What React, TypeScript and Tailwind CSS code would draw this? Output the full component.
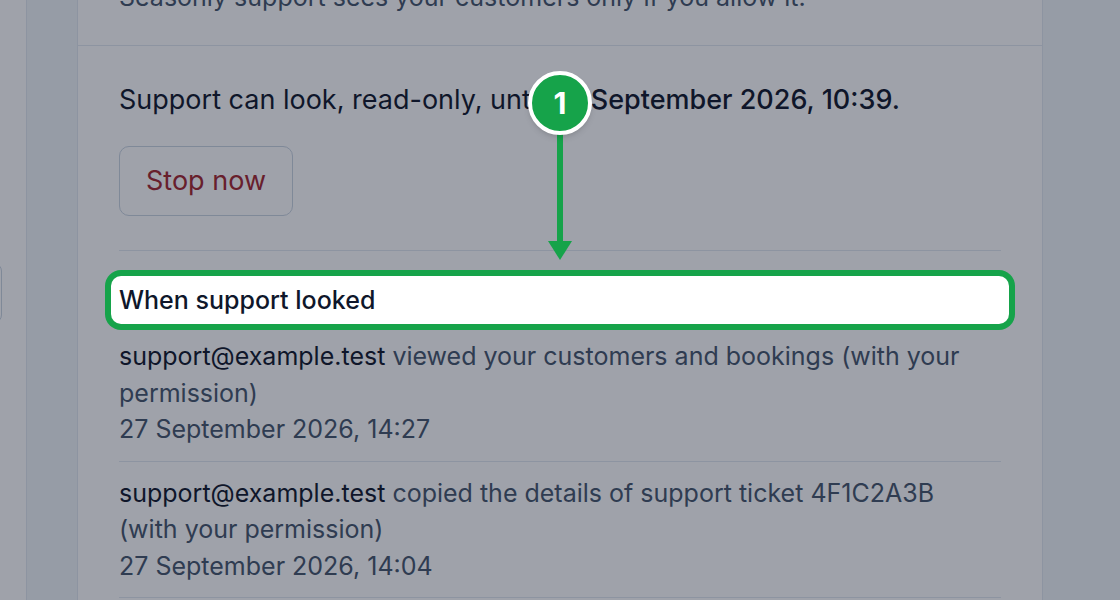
import React from 'react';

interface AccessEvent {
  who: string;
  what: string;
  when: string;
}

const events: AccessEvent[] = [
  {
    who: 'support@example.test',
    what: 'viewed your customers and bookings (with your permission)',
    when: '27 September 2026, 14:27',
  },
  {
    who: 'support@example.test',
    what: 'copied the details of support ticket 4F1C2A3B (with your permission)',
    when: '27 September 2026, 14:04',
  },
  {
    who: 'support@example.test',
    what: 'viewed your customers and bookings (with your permission)',
    when: '27 September 2026, 13:51',
  },
];

export default function App() {
  return (
    <div className="relative h-[600px] w-[1120px] overflow-hidden bg-slate-100 font-['Inter',sans-serif] text-[25px] leading-[36px] text-slate-900">
      <div className="flex h-full">
        <aside className="w-[27px] shrink-0 overflow-hidden border-r border-slate-200 bg-white">
          <div className="-ml-[38px] mt-[263px] h-[60px] w-[40px] rounded-lg border border-slate-300 bg-white" />
        </aside>

        <main className="flex-1 pl-[50px] pr-[77px]">
          <div className="-mt-[60px] border border-slate-200 bg-white">
            <section className="border-b border-slate-200 px-[41px] pb-[30px] pt-[38px]">
              <p className="text-slate-600">Seasonly support sees your customers only if you allow it.</p>
            </section>

            <section className="px-[41px] pt-9">
              <p className="text-[27px]">
                Support can look, read-only, until <span className="font-medium">27 September 2026, 10:39.</span>
              </p>
              <button className="mt-7 h-[70px] w-[174px] rounded-[10px] border-[1.5px] border-slate-300 bg-white text-[27px] text-[#a3262e]">
                Stop now
              </button>

              <div className="mt-[34px] border-t border-slate-200 pt-[31px]">
                <h3 className="relative z-20 -mx-2 -my-1.5 rounded-[10px] bg-white px-2 py-1.5 font-medium text-slate-900 ring-[6px] ring-[#16a34a]">
                  When support looked
                </h3>
                <ul className="mt-[7px]">
                  {events.map((ev, i) => (
                    <li key={i} className="border-b border-slate-200 py-[13px] leading-[36.5px]">
                      <p className="max-w-[860px] text-slate-600">
                        <span className="text-slate-900">{ev.who}</span> {ev.what}
                      </p>
                      <p className="text-slate-600">{ev.when}</p>
                    </li>
                  ))}
                </ul>
              </div>
            </section>
          </div>
        </main>
      </div>

      {/* dim overlay for the walkthrough */}
      <div className="absolute inset-0 z-10 bg-slate-900/40" />

      {/* step marker */}
      <svg className="absolute left-[546px] top-[133px] z-30" width="28" height="128" viewBox="0 0 28 128">
        <line x1="14" y1="0" x2="14" y2="110" stroke="#16a34a" strokeWidth="6" />
        <polygon points="2,108 26,108 14,127" fill="#16a34a" />
      </svg>
      <div className="absolute left-[528px] top-[71px] z-30 flex h-16 w-16 items-center justify-center rounded-full border-4 border-white bg-[#16a34a] text-[30px] font-bold leading-none text-white shadow-md">
        1
      </div>
    </div>
  );
}
